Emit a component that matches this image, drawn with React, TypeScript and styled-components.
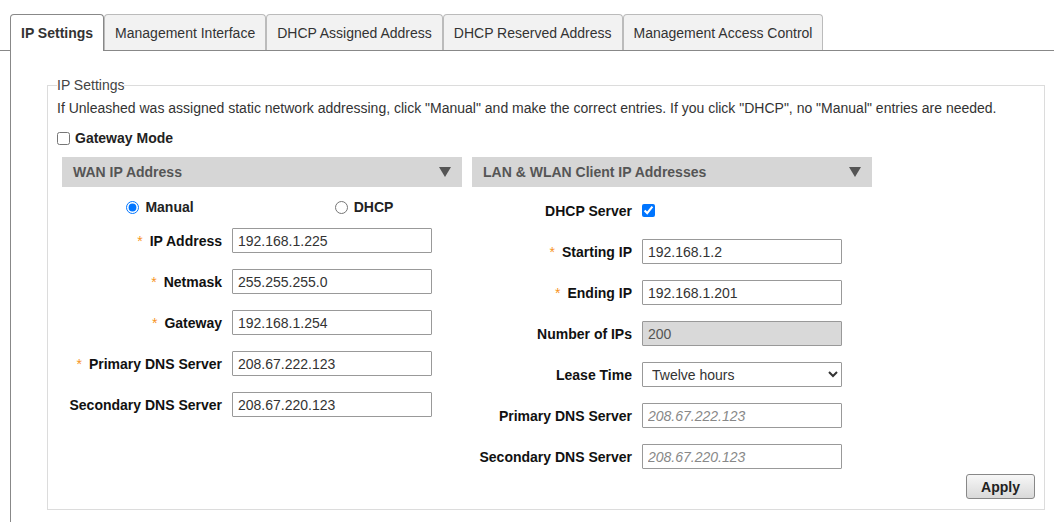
import React from "react";
import styled, { createGlobalStyle } from "styled-components";

const GlobalStyle = createGlobalStyle`
  html, body {
    margin: 0;
    padding: 0;
    background: #fff;
  }
  body {
    font-family: "Liberation Sans", Arial, sans-serif;
    font-size: 14px;
    color: #333;
    overflow: hidden;
  }
`;

const Page = styled.div`
  width: 1054px;
  height: 522px;
  overflow: hidden;
`;

const TabStrip = styled.div`
  display: flex;
  align-items: flex-end;
  padding: 14px 0 0 10px;
  border-bottom: 1px solid #888;
  height: 36px;
`;

const Tab = styled.div<{ $active?: boolean }>`
  box-sizing: border-box;
  height: ${(p) => (p.$active ? "37px" : "36px")};
  margin-bottom: ${(p) => (p.$active ? "-1px" : "0")};
  padding: 0 10px;
  display: flex;
  align-items: center;
  padding-bottom: ${(p) => (p.$active ? "1px" : "0")};
  border: 1px solid ${(p) => (p.$active ? "#888" : "#bbb")};
  border-bottom: none;
  border-radius: 4px 4px 0 0;
  background: ${(p) => (p.$active ? "#fff" : "#f2f2f2")};
  font-weight: ${(p) => (p.$active ? "bold" : "normal")};
  color: #333;
  white-space: nowrap;
`;

const Panel = styled.div`
  margin-left: 10px;
  border-left: 1px solid #888;
  padding: 26px 9px 40px 36px;
`;

const Fieldset = styled.fieldset`
  margin: 0;
  padding: 0 9px 10px 9px;
  border: 1px solid #dcdcdc;
  min-width: 0;
`;

const Legend = styled.legend`
  padding: 0;
  font-size: 14px;
  line-height: 16px;
  color: #444;
`;

const Description = styled.p`
  margin: 7px 0 0 0;
  line-height: 16px;
  color: #333;
  white-space: nowrap;
`;

const CheckRow = styled.label`
  display: flex;
  align-items: center;
  gap: 5px;
  height: 20px;
  margin-top: 12px;
  font-weight: bold;
  color: #222;
`;

const Check = styled.input.attrs({ type: "checkbox" })`
  width: 13px;
  height: 13px;
  margin: 0;
`;

const Columns = styled.div`
  display: flex;
  align-items: flex-start;
  gap: 10px;
  margin-top: 9px;
  padding-left: 5px;
`;

const Column = styled.section`
  width: 400px;
  display: flex;
  flex-direction: column;
`;

const SectionHeader = styled.div`
  height: 30px;
  padding: 0 11px;
  display: flex;
  align-items: center;
  justify-content: space-between;
  background: #d6d6d6;
  color: #555;
  font-weight: bold;
`;

const RadioRow = styled.div`
  display: flex;
  height: 20px;
  margin-top: 10px;
`;

const RadioCell = styled.label<{ $shift?: number }>`
  flex: 1;
  display: flex;
  align-items: center;
  justify-content: center;
  gap: 6px;
  padding-left: ${(p) => p.$shift ?? 0}px;
  font-weight: bold;
  color: #222;
`;

const Radio = styled.input.attrs({ type: "radio" })`
  width: 13px;
  height: 13px;
  margin: 0;
`;

const FieldList = styled.div<{ $offset: number }>`
  display: flex;
  flex-direction: column;
  gap: 16px;
  margin-top: ${(p) => p.$offset}px;
`;

const FieldRow = styled.div`
  display: grid;
  grid-template-columns: 160px 200px;
  column-gap: 10px;
  align-items: center;
  height: 25px;
`;

const FieldLabel = styled.label`
  text-align: right;
  font-weight: bold;
  color: #111;
  white-space: nowrap;
`;

const Required = styled.span`
  color: #f7941d;
  font-weight: normal;
  margin-right: 7px;
`;

const TextInput = styled.input`
  box-sizing: border-box;
  width: 200px;
  height: 25px;
  margin: 0;
  padding: 0 5px;
  border: 1px solid #999;
  border-radius: 1px;
  font-family: "Liberation Sans", Arial, sans-serif;
  font-size: 14px;
  color: #333;
  background: #fff;

  &::placeholder {
    font-style: italic;
    color: #888;
  }

  &:disabled {
    background: #d9d9d9;
    color: #555;
    border-color: #999;
  }
`;

const Select = styled.select`
  box-sizing: border-box;
  width: 200px;
  height: 25px;
  margin: 0;
  padding: 0 2px 0 5px;
  border: 1px solid #999;
  border-radius: 1px;
  font-family: "Liberation Sans", Arial, sans-serif;
  font-size: 14px;
  color: #333;
  background: #fff;
`;

const ButtonRow = styled.div`
  display: flex;
  justify-content: flex-end;
  margin-top: 5px;
`;

const ApplyButton = styled.button`
  box-sizing: border-box;
  width: 69px;
  height: 25px;
  border: 1px solid #888;
  border-radius: 3px;
  background: linear-gradient(#f7f7f7, #d9d9d9);
  font-family: "Liberation Sans", Arial, sans-serif;
  font-size: 14px;
  font-weight: bold;
  color: #222;
  padding: 0;
`;

const Caret = () => (
  <svg width="12" height="10" viewBox="0 0 12 10" aria-hidden="true">
    <polygon points="0,0 12,0 6,10" fill="#555" />
  </svg>
);

type Field = {
  label: string;
  required?: boolean;
  value?: string;
  placeholder?: string;
  disabled?: boolean;
};

const wanFields: Field[] = [
  { label: "IP Address", required: true, value: "192.168.1.225" },
  { label: "Netmask", required: true, value: "255.255.255.0" },
  { label: "Gateway", required: true, value: "192.168.1.254" },
  { label: "Primary DNS Server", required: true, value: "208.67.222.123" },
  { label: "Secondary DNS Server", value: "208.67.220.123" },
];

const tabs = [
  "IP Settings",
  "Management Interface",
  "DHCP Assigned Address",
  "DHCP Reserved Address",
  "Management Access Control",
];

const InputRow = ({ field }: { field: Field }) => (
  <FieldRow>
    <FieldLabel>
      {field.required && <Required>*</Required>}
      {field.label}
    </FieldLabel>
    <TextInput
      defaultValue={field.value}
      placeholder={field.placeholder}
      disabled={field.disabled}
    />
  </FieldRow>
);

export default function App() {
  return (
    <Page>
      <GlobalStyle />
      <TabStrip>
        {tabs.map((t, i) => (
          <Tab key={t} $active={i === 0}>
            {t}
          </Tab>
        ))}
      </TabStrip>
      <Panel>
        <Fieldset>
          <Legend>IP Settings</Legend>
          <Description>
            If Unleashed was assigned static network addressing, click "Manual" and make the
            correct entries. If you click "DHCP", no "Manual" entries are needed.
          </Description>
          <CheckRow>
            <Check />
            Gateway Mode
          </CheckRow>
          <Columns>
            <Column>
              <SectionHeader>
                WAN IP Address
                <Caret />
              </SectionHeader>
              <RadioRow>
                <RadioCell>
                  <Radio name="wan-mode" defaultChecked />
                  Manual
                </RadioCell>
                <RadioCell $shift={8}>
                  <Radio name="wan-mode" />
                  DHCP
                </RadioCell>
              </RadioRow>
              <FieldList $offset={11}>
                {wanFields.map((f) => (
                  <InputRow key={f.label} field={f} />
                ))}
              </FieldList>
            </Column>
            <Column>
              <SectionHeader>
                LAN &amp; WLAN Client IP Addresses
                <Caret />
              </SectionHeader>
              <FieldList $offset={11}>
                <FieldRow>
                  <FieldLabel>DHCP Server</FieldLabel>
                  <Check defaultChecked />
                </FieldRow>
                <InputRow field={{ label: "Starting IP", required: true, value: "192.168.1.2" }} />
                <InputRow field={{ label: "Ending IP", required: true, value: "192.168.1.201" }} />
                <InputRow field={{ label: "Number of IPs", value: "200", disabled: true }} />
                <FieldRow>
                  <FieldLabel>Lease Time</FieldLabel>
                  <Select defaultValue="12h">
                    <option value="1h">One hour</option>
                    <option value="4h">Four hours</option>
                    <option value="12h">Twelve hours</option>
                    <option value="1d">One day</option>
                    <option value="1w">One week</option>
                  </Select>
                </FieldRow>
                <InputRow field={{ label: "Primary DNS Server", placeholder: "208.67.222.123" }} />
                <InputRow field={{ label: "Secondary DNS Server", placeholder: "208.67.220.123" }} />
              </FieldList>
            </Column>
          </Columns>
          <ButtonRow>
            <ApplyButton>Apply</ApplyButton>
          </ButtonRow>
        </Fieldset>
      </Panel>
    </Page>
  );
}
